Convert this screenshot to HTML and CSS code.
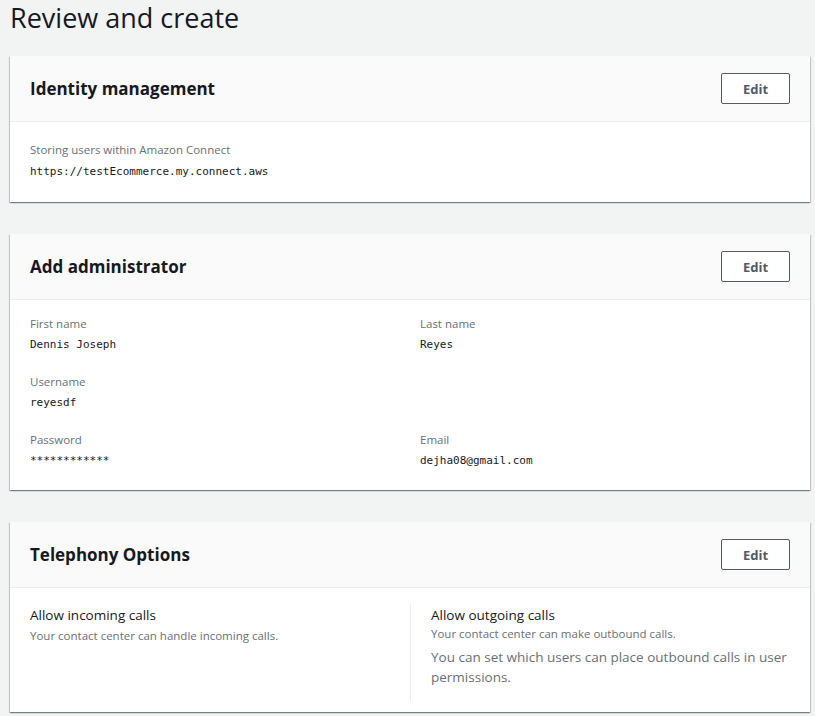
FILE: index.html
```html
<!DOCTYPE html>
<html>
<head>
<meta charset="utf-8">
<link rel="stylesheet" href="styles.css">
</head>
<body>
<div class="page">
  <h1 class="page-title">Review and create</h1>

  <section class="card">
    <header class="card-header">
      <h2 class="card-title">Identity management</h2>
      <button class="btn">Edit</button>
    </header>
    <div class="card-body single">
      <div class="field">
        <div class="label">Storing users within Amazon Connect</div>
        <div class="value">https://testEcommerce.my.connect.aws</div>
      </div>
    </div>
  </section>

  <section class="card">
    <header class="card-header">
      <h2 class="card-title">Add administrator</h2>
      <button class="btn">Edit</button>
    </header>
    <div class="card-body grid">
      <div class="field">
        <div class="label">First name</div>
        <div class="value">Dennis Joseph</div>
      </div>
      <div class="field">
        <div class="label">Last name</div>
        <div class="value">Reyes</div>
      </div>
      <div class="field">
        <div class="label">Username</div>
        <div class="value">reyesdf</div>
      </div>
      <div class="field"></div>
      <div class="field">
        <div class="label">Password</div>
        <div class="value">************</div>
      </div>
      <div class="field">
        <div class="label">Email</div>
        <div class="value">dejha08@gmail.com</div>
      </div>
    </div>
  </section>

  <section class="card">
    <header class="card-header">
      <h2 class="card-title">Telephony Options</h2>
      <button class="btn">Edit</button>
    </header>
    <div class="card-body columns">
      <div class="col">
        <div class="opt-title">Allow incoming calls</div>
        <div class="opt-desc">Your contact center can handle incoming calls.</div>
      </div>
      <div class="col col-divided">
        <div class="opt-title">Allow outgoing calls</div>
        <div class="opt-desc">Your contact center can make outbound calls.</div>
        <div class="opt-note">You can set which users can place outbound calls in user permissions.</div>
      </div>
    </div>
  </section>
</div>
</body>
</html>
```

FILE: styles.css
```css
* { box-sizing: border-box; }
html, body { margin: 0; padding: 0; }
body {
  background: #f2f3f3;
  font-family: "Open Sans", "Noto Sans", sans-serif;
  color: #16191f;
}
.page {
  padding: 0 5px 20px 10px;
}
.page-title {
  margin: 0;
  padding-top: 1px;
  font-size: 27px;
  line-height: 34px;
  font-weight: 400;
  color: #16191f;
  margin-bottom: 21px;
}
.card {
  background: #fff;
  box-shadow: 0 1px 1px 0 rgba(0,28,36,0.35), 1px 1px 1px 0 rgba(0,28,36,0.15), -1px 1px 1px 0 rgba(0,28,36,0.15);
  margin-bottom: 32px;
}
.card-header {
  display: flex;
  align-items: center;
  justify-content: space-between;
  background: #fafafa;
  border-bottom: 1px solid #eaeded;
  padding: 17px 20px;
}
.card-title {
  margin: 0;
  font-size: 17px;
  font-weight: 700;
  line-height: 22px;
  color: #16191f;
}
.btn {
  width: 69px;
  height: 31px;
  background: #fff;
  border: 1px solid #545b64;
  border-radius: 2px;
  font-family: "Open Sans", sans-serif;
  font-size: 13px;
  font-weight: 700;
  color: #545b64;
  padding: 0;
}
.card-body {
  padding: 20px;
}
.single .value {
  margin-top: 4px;
}
.grid {
  display: grid;
  grid-template-columns: 1fr 1fr;
  column-gap: 20px;
  row-gap: 19px;
  padding-top: 16px;
  padding-bottom: 19px;
}
.label {
  font-size: 11.5px;
  line-height: 16px;
  color: #687078;
}
.value {
  margin-top: 3px;
  font-family: "DejaVu Sans Mono", "Liberation Mono", monospace;
  font-size: 11px;
  line-height: 20px;
  color: #16191f;
}
.columns {
  display: grid;
  grid-template-columns: 1fr 1fr;
  padding-top: 16px;
  padding-bottom: 11px;
}
.col-divided {
  border-left: 1px solid #eaeded;
  padding-left: 20px;
  padding-bottom: 14px;
}
.opt-title {
  font-size: 13.5px;
  line-height: 22px;
  color: #16191f;
}
.opt-desc {
  font-size: 11.5px;
  line-height: 16px;
  color: #687078;
}
.col:first-child .opt-desc {
  margin-top: 2px;
}
.opt-note {
  margin-top: 5px;
  font-size: 13.5px;
  line-height: 20px;
  color: #687078;
}
```
